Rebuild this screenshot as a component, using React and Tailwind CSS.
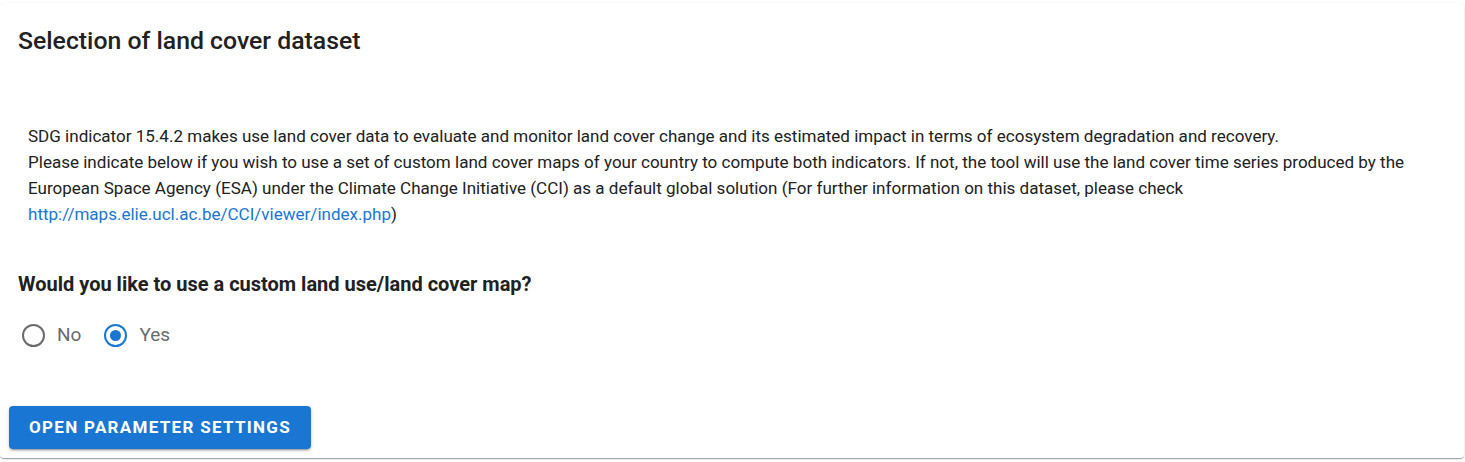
import React, { useState } from 'react';

// Land cover dataset selection card
const App = () => {
  const [custom, setCustom] = useState('yes');

  const Radio = ({ value, label }) => {
    const checked = custom === value;
    return (
      <label className="flex items-center cursor-pointer" onClick={() => setCustom(value)}>
        <span className="w-[42px] h-[42px] flex items-center justify-center">
          <span
            className={`w-[23px] h-[23px] rounded-full border-2 flex items-center justify-center ${
              checked ? 'border-[#1976d2]' : 'border-[#6b6b6b]'
            }`}
          >
            {checked && <span className="w-[11px] h-[11px] rounded-full bg-[#1976d2]" />}
          </span>
        </span>
        <span className="text-[19px] text-[#6b6b6b] ml-[3px]">{label}</span>
      </label>
    );
  };

  return (
    <div className="bg-white w-[1465px] h-[462px] pt-[3px] pr-[1px] font-['Roboto',sans-serif]">
      <div className="bg-white rounded-[4px] shadow-[0_2px_1px_-1px_rgba(0,0,0,0.2),0_1px_1px_0_rgba(0,0,0,0.14),0_1px_3px_0_rgba(0,0,0,0.12)] h-[455px] flex flex-col">
        {/* Header */}
        <div className="px-[18px] pt-[22px]">
          <h2 className="text-[24.8px] font-medium text-[#212121] leading-[32px]">Selection of land cover dataset</h2>
        </div>

        {/* Description */}
        <div className="px-[28px] mt-[66px] text-[17.05px] leading-[26px] text-[#212121]">
          <p>
            SDG indicator 15.4.2 makes use land cover data to evaluate and monitor land cover change and its estimated impact in terms of ecosystem degradation and recovery.
          </p>
          <p>
            Please indicate below if you wish to use a set of custom land cover maps of your country to compute both indicators. If not, the tool will use the land cover time series produced by the European Space Agency (ESA) under the Climate Change Initiative (CCI) as a default global solution (For further information on this dataset, please check{' '}
            <a href="#" className="text-[#1976d2]">http://maps.elie.ucl.ac.be/CCI/viewer/index.php</a>)
          </p>
        </div>

        {/* Question */}
        <div className="px-[18px] mt-[44px]">
          <h3 className="text-[20px] font-bold text-[#212121] leading-[26px]">Would you like to use a custom land use/land cover map?</h3>
          <div className="flex items-center gap-[13px] mt-[17px] -ml-[6px]">
            <Radio value="no" label="No" />
            <Radio value="yes" label="Yes" />
          </div>
        </div>

        {/* Action */}
        <div className="px-[9px] mt-auto pb-[9px]">
          <button className="bg-[#1976d2] text-white text-[17px] font-bold tracking-[1.3px] uppercase h-[43px] w-[302px] rounded-[4px] shadow-[0_3px_1px_-2px_rgba(0,0,0,0.2),0_2px_2px_0_rgba(0,0,0,0.14),0_1px_5px_0_rgba(0,0,0,0.12)]">
            Open parameter settings
          </button>
        </div>
      </div>
    </div>
  );
};

export default App;
